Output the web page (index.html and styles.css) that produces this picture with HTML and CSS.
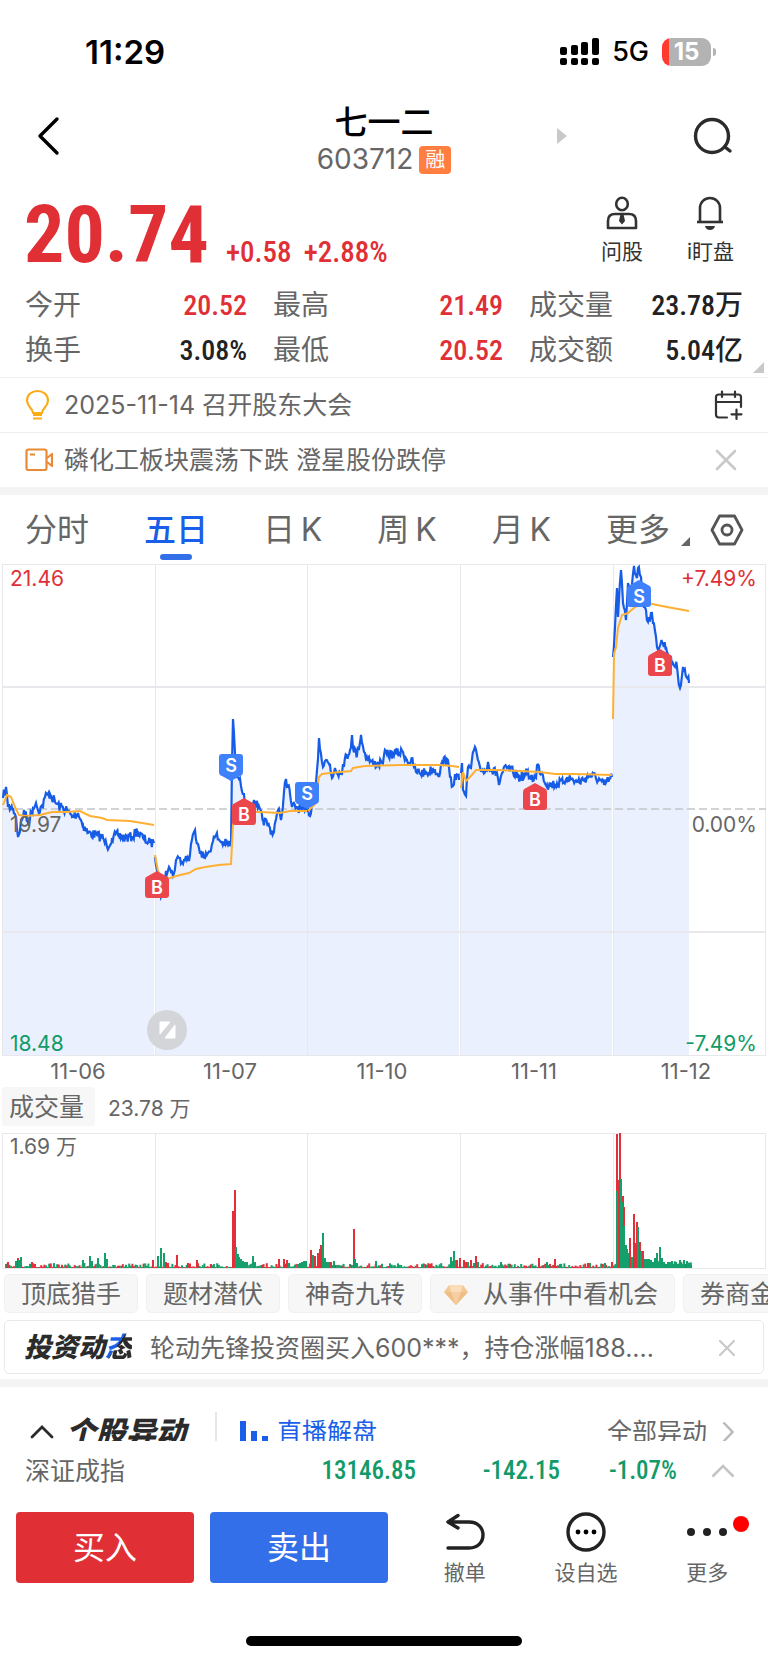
FILE: index.html
```html
<!DOCTYPE html>
<html lang="zh-CN">
<head>
  <meta charset="UTF-8" />
  <meta name="viewport" content="width=device-width, initial-scale=1" />
  <title>七一二 603712</title>
  <link rel="stylesheet" href="styles.css">
</head>
<body>

  <div class="status-bar">
    <span class="clock">11:29</span>
    <div class="status-right">
      <svg class="signal" width="40" height="28" viewBox="0 0 40 28">
        <rect x="0" y="9" width="7" height="8" rx="2" /><rect x="11" y="7" width="7" height="10" rx="2" />
        <rect x="21" y="4" width="7" height="13" rx="2" /><rect x="32" y="0" width="7" height="17" rx="2" />
        <rect x="0" y="20" width="7" height="7" rx="2" /><rect x="11" y="20" width="7" height="7" rx="2" />
        <rect x="21" y="20" width="7" height="7" rx="2" /><rect x="32" y="20" width="7" height="7" rx="2" />
      </svg>
      <span class="network">5G</span>
      <span class="battery">15</span>
    </div>
  </div>

  <header class="header">
    <button class="icon-button back" aria-label="返回">
      <svg width="28" height="40" viewBox="0 0 28 40"><path d="M23 3 L6 20 L23 37" fill="none" stroke="#000" stroke-width="3.4" stroke-linecap="round" stroke-linejoin="round" /></svg>
    </button>
    <div class="stock">
      <h1>七一二</h1>
      <div class="stock-code">603712<span class="tag">融</span></div>
    </div>
    <button class="icon-button next" aria-label="下一只">
      <svg width="10" height="18" viewBox="0 0 10 18"><path d="M0 1 L10 9 L0 17 Z" fill="#c9c9c9" /></svg>
    </button>
    <button class="icon-button search" aria-label="搜索">
      <svg width="42" height="40" viewBox="0 0 42 40" fill="none" stroke="#2b2b2b" stroke-width="3.4" stroke-linecap="round"><circle cx="20" cy="20" r="16.5" /><path d="M33 31 L38 35" /></svg>
    </button>
  </header>

  <section class="quote">
    <span class="price">20.74</span>
    <span class="change">+0.58</span>
    <span class="change">+2.88%</span>
    <div class="quote-tools">
      <button class="tool">
        <svg width="34" height="36" viewBox="0 0 34 36" fill="none" stroke="#333" stroke-width="2.6">
          <ellipse cx="17" cy="9" rx="5.8" ry="6.2" />
          <path d="M3 33 V26 Q3 19 10 19 H24 Q31 19 31 26 V33 Z" stroke-linejoin="round" />
          <path d="M15.5 19 H18.5 L20 26 L17 29.5 L14 26 Z" fill="#333" stroke="none" />
        </svg>
        <span>问股</span>
      </button>
      <button class="tool">
        <svg width="34" height="36" viewBox="0 0 34 36" fill="none" stroke="#333" stroke-width="2.6">
          <path d="M7 26.5 V13 A10 10 0 0 1 27 13 V26.5" /><path d="M4 27 H30" />
          <path d="M12 31 H22 Q21 35 17 35 Q13 35 12 31 Z" fill="#333" stroke="none" />
        </svg>
        <span>i盯盘</span>
      </button>
    </div>
  </section>

  <dl class="stats">
    <div class="stat"><dt>今开</dt><dd class="up">20.52</dd></div>
    <div class="stat"><dt>最高</dt><dd class="up">21.49</dd></div>
    <div class="stat"><dt>成交量</dt><dd>23.78万</dd></div>
    <div class="stat"><dt>换手</dt><dd>3.08%</dd></div>
    <div class="stat"><dt>最低</dt><dd class="up">20.52</dd></div>
    <div class="stat"><dt>成交额</dt><dd>5.04亿</dd></div>
  </dl>

  <div class="notice">
    <svg width="28" height="32" viewBox="0 0 28 32" fill="none" stroke="#fbab18" stroke-width="2.2">
      <path d="M8 24 C8 19 2 18 2 11.5 C2 5.5 7 2 12.5 2 C18 2 23 5.5 23 11.5 C23 18 17 19 17 24 Z" stroke-linejoin="round" /><path d="M8 26 H17 M8 29.5 H17" />
    </svg>
    <span class="notice-text">2025-11-14 召开股东大会</span>
    <button class="icon-button" aria-label="加入日历">
      <svg width="30" height="32" viewBox="0 0 30 32" fill="none" stroke="#333" stroke-width="2.2" stroke-linecap="round">
        <path d="M14 28.5 H6 Q3 28.5 3 25.5 V8 Q3 5.5 6 5.5 H25 Q28 5.5 28 8 V18" /><path d="M3 13 H28 M9 2.5 V8 M22 2.5 V8 M23.5 20.5 V30 M18.5 25.3 H28.5" />
      </svg>
    </button>
  </div>
  <div class="notice">
    <svg width="28" height="32" viewBox="0 0 28 32" fill="none" stroke="#ea8a35" stroke-width="2.2" stroke-linejoin="round">
      <rect x="1.5" y="5.5" width="20" height="20.5" rx="2" /><path d="M5 10.5 H10 M22 14 L27 10 V22 L22 18" />
    </svg>
    <span class="notice-text">磷化工板块震荡下跌 澄星股份跌停</span>
    <button class="icon-button close" aria-label="关闭">
      <svg width="22" height="22" viewBox="0 0 22 22"><path d="M2 2 L20 20 M20 2 L2 20" stroke="#c9c9c9" stroke-width="2.6" stroke-linecap="round" /></svg>
    </button>
  </div>

  <div class="divider"></div>

  <nav class="tabs">
    <div class="tab-list">
      <button class="tab">分时</button>
      <button class="tab active">五日</button>
      <button class="tab">日&thinsp;K</button>
      <button class="tab">周&thinsp;K</button>
      <button class="tab">月&thinsp;K</button>
      <button class="tab tab-more">更多</button>
    </div>
    <button class="icon-button settings" aria-label="设置">
      <svg width="34" height="34" viewBox="0 0 34 34" fill="none" stroke="#555" stroke-width="2.8" stroke-linejoin="round"><path d="M9.5 3 H24.5 L32 17 L24.5 31 H9.5 L2 17 Z" /><circle cx="17" cy="17" r="5" /></svg>
    </button>
  </nav>

  <div class="chart">
    <svg id="price-chart" viewBox="0 0 768 492"></svg>
    <span class="axis top left up">21.46</span>
    <span class="axis top right up">+7.49%</span>
    <span class="axis middle left">19.97</span>
    <span class="axis middle right">0.00%</span>
    <span class="axis bottom left down">18.48</span>
    <span class="axis bottom right down">-7.49%</span>
  </div>
  <div class="dates">
    <span>11-06</span><span>11-07</span><span>11-10</span><span>11-11</span><span>11-12</span>
  </div>

  <div class="indicator">
    <button class="indicator-name">成交量</button>
    <span>23.78 万</span>
  </div>
  <div class="chart">
    <svg id="volume-chart" viewBox="0 0 768 137"></svg>
    <span class="axis top left">1.69 万</span>
  </div>

  <div class="chips">
    <button class="chip">顶底猎手</button>
    <button class="chip">题材潜伏</button>
    <button class="chip">神奇九转</button>
    <button class="chip">
      <svg width="24" height="20" viewBox="0 0 24 20"><path d="M5 0 H19 L24 7 L12 20 L0 7 Z" fill="#f3c894" /><path d="M0 7 H24 L12 20 Z" fill="#f0bd84" /><path d="M5 0 L7 7 H17 L19 0 Z" fill="#f9dcb8" /><path d="M7 7 H17 L12 20 Z" fill="#f5cfa2" /></svg>
      从事件中看机会
    </button>
    <button class="chip">券商金股</button>
  </div>

  <div class="feed">
    <strong class="feed-title">投资动<em>态</em></strong>
    <span class="feed-text">轮动先锋投资圈买入600***，持仓涨幅188....</span>
    <button class="icon-button" aria-label="关闭">
      <svg width="18" height="18" viewBox="0 0 18 18"><path d="M2 2 L16 16 M16 2 L2 16" stroke="#c9c9c9" stroke-width="2.2" stroke-linecap="round" /></svg>
    </button>
  </div>

  <div class="divider"></div>

  <section class="moves">
    <svg width="24" height="14" viewBox="0 0 24 14"><path d="M2 12 L12 2 L22 12" fill="none" stroke="#2b2b2b" stroke-width="2.8" stroke-linecap="round" /></svg>
    <h2>个股异动</h2>
    <a class="live" href="#">
      <svg width="29" height="26" viewBox="0 0 29 26" fill="#1a5fe8"><rect x="0" y="2" width="6" height="24" /><rect x="11" y="12" width="6" height="14" /><rect x="22" y="17" width="6" height="9" /></svg>
      直播解盘
    </a>
    <a class="all-moves" href="#">
      全部异动
      <svg width="12" height="22" viewBox="0 0 12 22"><path d="M1.5 1.5 L10.5 11 L1.5 20.5" fill="none" stroke="#b9b9b9" stroke-width="2.4" /></svg>
    </a>
  </section>

  <div class="index-row">
    <span class="index-name">深证成指</span>
    <span class="num">13146.85</span>
    <span class="num">-142.15</span>
    <span class="num">-1.07%</span>
    <svg width="24" height="14" viewBox="0 0 24 14"><path d="M1.5 12.5 L12 2 L22.5 12.5" fill="none" stroke="#c4c4c4" stroke-width="2.6" /></svg>
  </div>

  <footer class="trade-bar">
    <button class="trade buy">买入</button>
    <button class="trade sell">卖出</button>
    <div class="actions">
      <button class="action">
        <svg width="40" height="40" viewBox="0 0 40 40" fill="none" stroke="#222" stroke-width="3.4" stroke-linecap="round" stroke-linejoin="round"><path d="M13 3.5 L3 10 L13 16 M3 10 H24 C33 10 38 16 38 23 C38 30 33 36 24 36 H3" /></svg>
        <span>撤单</span>
      </button>
      <button class="action">
        <svg width="40" height="40" viewBox="0 0 40 40"><circle cx="20" cy="20" r="18" fill="none" stroke="#222" stroke-width="3.4" /><circle cx="12" cy="20" r="2.4" /><circle cx="20" cy="20" r="2.4" /><circle cx="28" cy="20" r="2.4" /></svg>
        <span>设自选</span>
      </button>
      <button class="action has-badge">
        <svg width="40" height="40" viewBox="0 0 40 40" fill="#222"><circle cx="4" cy="20" r="4" /><circle cx="20" cy="20" r="4" /><circle cx="36" cy="20" r="4" /></svg>
        <span>更多</span>
      </button>
    </div>
  </footer>
  <div class="home-indicator"></div>

  <script src="script.js"></script>
</body>
</html>
```

FILE: styles.css
```css
* {
  box-sizing: border-box;
}

body {
  margin: 0;
  background: #fff;
  color: #666;
  font-family: Inter, "Noto Sans CJK SC", sans-serif;
  overflow-x: hidden;
}

button {
  margin: 0;
  padding: 0;
  border: none;
  background: none;
  color: inherit;
  font: inherit;
  cursor: pointer;
}

a {
  color: inherit;
  text-decoration: none;
}

svg {
  display: block;
  flex: none;
}

.icon-button {
  display: flex;
  align-items: center;
}

.up {
  color: #e03036;
}

.down {
  color: #129b68;
}

.divider {
  height: 8px;
  background: #f4f4f4;
}

/* status bar */
.status-bar {
  display: flex;
  justify-content: space-between;
  align-items: center;
  padding: 30px 57px 28px 85px;
  line-height: 44px;
  color: #000;
}

.clock {
  font-size: 33px;
  font-weight: 600;
}

.status-right {
  display: flex;
  align-items: center;
}

.network {
  margin: 0 13px 0 12px;
  font-size: 27px;
  font-weight: 500;
}

.battery {
  position: relative;
  width: 49px;
  border-radius: 9px;
  background: linear-gradient(to right, #ff3b30 7px, #b3b3b3 7px);
  color: #fff;
  font-size: 24px;
  font-weight: 700;
  line-height: 28px;
  text-align: center;
}

.battery::after {
  content: "";
  position: absolute;
  top: 10px;
  right: -5px;
  width: 3px;
  height: 8px;
  border-radius: 0 4px 4px 0;
  background: #b3b3b3;
}

/* header */
.header {
  display: grid;
  grid-template-columns: 200px 1fr 158px 42px;
  align-items: center;
  padding: 0 34px;
}

.header .icon-button {
  margin-bottom: 8px;
}

.stock {
  text-align: center;
}

.stock h1 {
  margin: 0;
  color: #000;
  font-size: 33px;
  font-weight: 500;
  line-height: 40px;
}

.stock-code {
  display: flex;
  justify-content: center;
  align-items: center;
  gap: 6px;
  font-size: 28px;
  line-height: 35px;
}

.tag {
  width: 32px;
  border-radius: 4px;
  background: #ff7e40;
  color: #fff;
  font-size: 20px;
  line-height: 28px;
}

.next {
  padding-left: 23px;
}

/* quote */
.quote {
  display: flex;
  align-items: flex-end;
  padding: 18px 34px 0 24px;
  color: #e03036;
  font-family: "Roboto Condensed", "Open Sans Condensed", "Noto Sans Condensed", Roboto, sans-serif;
}

.price {
  margin-right: 17px;
  font-size: 80px;
  font-weight: 700;
  line-height: 60px;
}

.change {
  margin-right: 12px;
  font-size: 29px;
  font-weight: 500;
  line-height: 26px;
}

.quote-tools {
  display: flex;
  gap: 44px;
  margin-left: auto;
  font-family: Inter, "Noto Sans CJK SC", sans-serif;
}

.tool {
  display: flex;
  flex-direction: column;
  align-items: center;
  gap: 8px;
  color: #333;
  font-size: 21px;
  line-height: 26px;
}

.stats {
  position: relative;
  display: grid;
  grid-template-columns: 222fr 230fr 214fr;
  column-gap: 26px;
  margin: 0;
  padding: 18px 25px 4px;
  font-size: 28px;
  line-height: 45px;
}

.stats::after {
  content: "";
  position: absolute;
  right: 4px;
  bottom: 4px;
  border-left: 11px solid transparent;
  border-bottom: 11px solid #c8c8c8;
}

.stat {
  display: flex;
  justify-content: space-between;
}

.stat dd {
  margin: 0;
  color: #222;
  font-family: "Roboto Condensed", "Open Sans Condensed", "Noto Sans Condensed", Roboto, "Noto Sans CJK SC", sans-serif;
  font-weight: 500;
}

.stat dd.up {
  color: #e03036;
}

/* notices */
.notice {
  display: flex;
  align-items: center;
  padding: 10px 25px;
  border-top: 1px solid #eee;
  font-size: 25px;
  line-height: 34px;
}

.notice-text {
  flex: 1;
  margin-left: 11px;
}

.close {
  padding-right: 6px;
}

/* tabs */
.tabs {
  display: flex;
  align-items: center;
  padding: 15px 24px 4px 25px;
}

.tab-list {
  display: flex;
  flex: 1;
  justify-content: space-between;
}

.tab {
  font-size: 32px;
  line-height: 40px;
}

.tab::after {
  content: "";
  display: block;
  width: 32px;
  height: 6px;
  margin: 4px auto 0;
  border-radius: 3px;
}

.tab.active {
  color: #1a5fe8;
  font-weight: 500;
}

.tab.active::after {
  background: #336fe8;
}

.tab-more {
  position: relative;
  padding-right: 20px;
}

.tab-more::before {
  content: "";
  position: absolute;
  right: 0;
  top: 27px;
  border-left: 9px solid transparent;
  border-bottom: 9px solid #666;
}

.settings {
  margin: 0 0 10px 20px;
}

/* charts */
.chart {
  position: relative;
}

.chart svg {
  width: 100%;
}

.axis {
  position: absolute;
  font-size: 21px;
  line-height: 28px;
}

.left {
  left: 10px;
}

.right {
  right: 11px;
}

.top {
  top: 1px;
}

.middle {
  top: calc(50% + 1px);
}

.bottom {
  bottom: -2px;
}

.marker {
  fill: #fff;
  font-size: 18px;
  font-weight: 600;
  text-anchor: middle;
}

.dates {
  display: flex;
  padding: 1px 6px 2px 2px;
  font-size: 22px;
  line-height: 28px;
}

.dates span {
  flex: 1;
  text-align: center;
}

.indicator {
  display: flex;
  align-items: center;
  gap: 13px;
  margin-bottom: 6px;
  padding-left: 2px;
  font-size: 21px;
}

.indicator-name {
  padding: 2px 11px 0 7px;
  border-radius: 3px;
  background: #f7f7f7;
  font-size: 25px;
  line-height: 37px;
}

/* chips and feed */
.chips {
  display: flex;
  gap: 8px;
  padding: 5px 0 7px 4px;
  overflow: hidden;
}

.chip {
  display: flex;
  flex: none;
  align-items: center;
  gap: 15px;
  padding: 2px 16px 0;
  border: 1px solid #f1f1f1;
  border-radius: 5px;
  background: #f7f7f7;
  font-size: 25px;
  line-height: 35px;
}

.chip svg {
  margin-left: -3px;
}

.feed {
  display: flex;
  align-items: center;
  margin: 0 4px 5px;
  padding: 2px 27px 0 19px;
  border: 1px solid #e9e9e9;
  border-radius: 5px;
  font-size: 25px;
  line-height: 50px;
}

.feed-title {
  color: #2b2b2b;
  font-size: 27px;
  font-style: italic;
  font-weight: 900;
}

.feed-title em {
  background: linear-gradient(125deg, #1a5fe8 45%, #2b2b2b 45%);
  background-clip: text;
  color: transparent;
}

.feed-text {
  flex: 1;
  margin-left: 18px;
}

/* moves list, cut off by the bar below */
.moves {
  display: flex;
  align-items: flex-start;
  height: 54px;
  padding: 25px 34px 0 30px;
  overflow: hidden;
  font-size: 25px;
  line-height: 40px;
}

.moves > * {
  flex: none;
  height: 40px;
}

.moves h2 {
  margin: 0 29px 0 12px;
  color: #2b2b2b;
  font-size: 30px;
  font-style: italic;
  font-weight: 900;
}

.live {
  display: flex;
  align-items: center;
  gap: 8px;
  padding-left: 23px;
  border-left: 2px solid #e6e6e6;
  color: #1a5fe8;
}

.all-moves {
  display: flex;
  align-items: center;
  gap: 15px;
  margin-left: auto;
}

.index-row {
  display: flex;
  align-items: center;
  padding: 13px 33px 13px 25px;
  font-size: 25px;
  line-height: 34px;
}

.index-name {
  flex: 1;
}

.num {
  width: 144px;
  color: #129b68;
  font-family: "Roboto Condensed", "Open Sans Condensed", "Noto Sans Condensed", Roboto, sans-serif;
  font-weight: 500;
  text-align: right;
}

.num:last-of-type {
  width: 117px;
  margin-right: 34px;
}

/* trade bar */
.trade-bar {
  display: flex;
  align-items: flex-start;
  gap: 16px;
  padding: 11px 0 0 16px;
}

.trade {
  flex: 178;
  border-radius: 4px;
  color: #fff;
  font-size: 32px;
  line-height: 71px;
}

.buy {
  background: #e03036;
}

.sell {
  background: #336fe8;
}

.actions {
  display: flex;
  flex: 364;
}

.action {
  position: relative;
  display: flex;
  flex: 1;
  flex-direction: column;
  align-items: center;
  gap: 8px;
  font-size: 21px;
  line-height: 26px;
}

.has-badge::after {
  content: "";
  position: absolute;
  top: 4px;
  right: 19px;
  width: 16px;
  height: 16px;
  border-radius: 50%;
  background: #f00;
}

.home-indicator {
  width: 36%;
  height: 10px;
  margin: 50px auto 17px;
  border-radius: 5px;
  background: #000;
}
```

FILE: script.js
```js
// each day: price points and average points, x,y in chart units
const days = [
  {
    price: "3,234 6,223 8,243 13,244 16,253 18,273 22,256 24,246 28,259 33,244 36,239 38,246 42,243 45,233 50,230 55,238 60,243 67,246 72,253 78,249 83,261 88,269 97,271 103,274 107,283 112,274 118,271 125,274 132,273 137,267 143,274 150,279 154,279",
    avg: "3,241 7,231 11,233 15,243 19,251 25,252 40,251 52,248 65,248 80,247 90,252 102,254 107,256 130,257 154,261"
  },
  {
    price: "155,293 157,306 159,320 161,333 163,320 166,307 169,303 171,308 173,312 176,296 180,294 183,300 186,292 189,297 191,280 195,266 198,280 201,288 205,294 208,289 212,280 216,271 220,277 226,280 231,280 232,200 233,155 235,190 237,213 239,215 241,222 244,230 246,248 250,250 254,236 258,244 263,256 269,262 273,270 276,255 278,246 281,256 284,228 286,215 290,230 292,243 297,243 302,246 307,248",
    avg: "155,291 158,307 161,315 170,314 180,311 189,309 196,305 205,303 219,301 231,300 233,260 240,248 260,248 280,249 290,247 307,247"
  },
  {
    price: "308,243 310,252 312,240 315,225 317,206 319,174 321,190 323,203 326,196 330,201 332,214 335,204 341,210 343,200 350,186 352,171 353,184 357,191 361,171 364,188 368,194 373,200 382,199 384,191 393,190 403,188 407,196 413,199 416,208 427,209 433,205 440,209 442,198 447,195 450,213 453,222 455,210 459,216",
    avg: "308,247 315,240 319,213 322,210 330,209 351,207 353,204 365,202 400,201 440,201 452,202 459,203"
  },
  {
    price: "461,209 462,199 463,226 466,232 468,203 471,204 474,186 477,191 480,203 485,208 488,198 492,207 497,209 499,221 502,209 507,204 513,208 520,214 527,209 530,213 536,214 537,201 542,209 547,221 563,219 567,213 577,218 583,216 590,211 600,216 604,221 612,213",
    avg: "461,224 463,208 466,217 470,213 476,206 495,206 520,207 540,208 555,210 575,210 612,211"
  },
  {
    price: "613,93 615,63 617,24 618,53 621,6 623,39 626,56 628,19 631,26 634,2 637,14 638,4 641,13 643,36 646,46 648,58 651,49 653,59 656,73 657,83 662,78 666,83 670,96 677,103 680,124 683,103 689,119",
    avg: "613,155 614,90 616,83 618,64 622,51 628,49 635,43 643,39 652,40 667,43 689,47"
  }
];

const markers = [
  ["B", 157, 307], ["S", 231, 190, true], ["B", 244, 234], ["S", 307, 218, true],
  ["B", 535, 219], ["S", 639, 16], ["B", 660, 85]
];

let seed = 7;
function rand() {
  seed = (seed * 16807) % 2147483647;
  return seed / 2147483647;
}

function parse(points) {
  return points.split(" ").map(p => p.split(",").map(Number));
}

// adds small ticks between the given points
function jagged(points) {
  const out = [points[0]];
  for (let i = 1; i < points.length; i++) {
    const [x0, y0] = points[i - 1];
    const [x1, y1] = points[i];
    for (let x = x0 + 0.9; x < x1 - 0.4; x += 0.9) {
      const t = (x - x0) / (x1 - x0);
      out.push([x.toFixed(1), (y0 + (y1 - y0) * t + (rand() - 0.5) * 10).toFixed(1)]);
    }
    out.push(points[i]);
  }
  return out;
}

let fills = "";
let lines = "";
days.forEach(day => {
  const pts = jagged(parse(day.price));
  const first = pts[0][0];
  const last = pts[pts.length - 1][0];
  fills += `<polygon fill="#eaf0fe" points="${first},491 ${pts.join(" ")} ${last},491" />`;
  lines += `<polyline fill="none" stroke="#165ce6" stroke-width="2.2" points="${pts.join(" ")}" />`;
  lines += `<polyline fill="none" stroke="#ffb033" stroke-width="2" points="${day.avg}" />`;
});

let grid = "";
[155, 307, 460, 613].forEach(x => grid += `<path d="M${x}.5 0 V491" />`);
[123, 368].forEach(y => grid += `<path d="M2 ${y} H766" stroke-width="2" />`);

let marks = "";
markers.forEach(([letter, x, y, down]) => {
  const shape = down
    ? "M-9 0 H9 Q12 0 12 3 V18 Q12 21 9 22 L0 27 L-9 22 Q-12 21 -12 18 V3 Q-12 0 -9 0 Z"
    : "M0 0 L9 5 Q12 6 12 9 V24 Q12 27 9 27 H-9 Q-12 27 -12 24 V9 Q-12 6 -9 5 Z";
  marks += `<g transform="translate(${x} ${y})"><path d="${shape}" fill="${letter === "S" ? "#3f80fb" : "#ec464d"}" />
    <text class="marker" y="${down ? 18 : 23}">${letter}</text></g>`;
});

document.getElementById("price-chart").innerHTML = `
  ${fills}
  <g fill="none" stroke="#e8e8ec"><rect x="2.5" y="0.5" width="763" height="491" />${grid}</g>
  <path d="M3 245 H766" stroke="#c3c5ca" stroke-width="1.6" stroke-dasharray="8 4" />
  ${lines}
  ${marks}
  <circle cx="167" cy="466" r="20" fill="#d4d5d9" />
  <path d="M160 458 H170 L160 470 Z M175 461 V474 H165 Z" fill="#fff" stroke="#fff" stroke-linejoin="round" />`;

// volume spikes: x, height, colour
const spikes = "8,6,r 18,10,r 21,11,g 19,8,g 16,7,g 32,6,r 35,4,r 83,8,g 90,12,g 92,7,g 98,10,g 105,15,g 107,9,g 153,8,r 158,12,g 161,20,g 164,15,g 166,6,r 168,5,r 177,13,r 188,5,r 197,8,r 211,4,r 233,57,r 235,78,r 236,21,g 238,14,g 239,11,g 241,9,g 243,7,g 245,6,g 247,6,g 253,12,g 255,6,g 279,9,r 284,9,r 287,8,r 289,5,g 295,3,g 298,4,g 300,5,g 302,6,g 304,7,g 306,7,g 311,18,r 313,13,g 315,12,r 318,15,r 320,19,r 321,23,r 323,35,g 325,10,g 327,6,g 329,6,g 331,6,r 334,7,g 354,39,r 355,9,g 357,5,g 376,7,g 451,11,g 453,7,g 454,17,g 456,8,g 457,8,r 460,10,r 464,8,r 466,6,r 468,6,g 471,8,r 474,5,g 476,12,r 478,6,g 501,6,g 539,10,r 547,6,g 555,9,r 560,4,g 588,5,r 605,5,g 612,6,r 617,134,r 618,88,r 620,135,r 617,77,g 621,89,g 623,72,r 622,66,g 624,61,r 624,42,g 626,23,g 627,19,g 628,15,g 630,30,r 632,11,g 634,54,r 635,25,r 637,46,r 638,41,g 640,26,r 641,17,g 643,17,r 645,9,g 647,9,g 649,9,g 651,8,g 653,6,g 655,10,g 657,15,g 660,21,g 662,10,g 664,6,g 668,6,g 672,7,g 676,6,g 680,8,g 684,8,g 687,7,g 689,5,g 691,3,g";

let bars = "";
function bar(x, h, red) {
  bars += `<rect x="${x}" y="${(136 - h).toFixed(1)}" width="2" height="${h.toFixed(1)}" fill="${red ? "#e2303a" : "#149f6b"}" />`;
}
for (let x = 5; x < 691; x += 1.6) {
  const h = 1 + Math.pow(rand(), 2) * 4;
  bar(x.toFixed(1), x > 614 ? h + 3 : h, rand() < (x > 614 ? 0.15 : 0.45));
}
spikes.split(" ").forEach(s => {
  const [x, h, colour] = s.split(",");
  bar(x - 1, Number(h), colour === "r");
});

let columns = "";
[155, 307, 460, 613].forEach(x => columns += `<path d="M${x}.5 1 V136" />`);
document.getElementById("volume-chart").innerHTML = `
  <g fill="none" stroke="#e8e8ec"><rect x="2.5" y="1.5" width="763" height="135" />${columns}</g>
  ${bars}`;
```
